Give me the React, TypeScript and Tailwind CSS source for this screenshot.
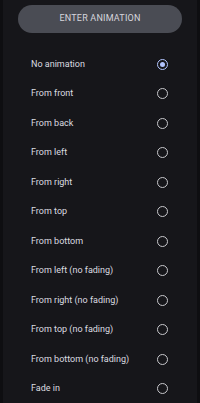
const options = [
  "No animation",
  "From front",
  "From back",
  "From left",
  "From right",
  "From top",
  "From bottom",
  "From left (no fading)",
  "From right (no fading)",
  "From top (no fading)",
  "From bottom (no fading)",
  "Fade in",
];

export default function App() {
  const selected = 0;
  return (
    <div
      className="w-[200px] h-[403px] overflow-hidden bg-[#0e0e11] px-[3px]"
      style={{ fontFamily: "Roboto, 'Liberation Sans', sans-serif" }}
    >
      <div className="h-full bg-[#16161a] flex flex-col">
        <div className="pt-[5px] px-[15px]">
          <button className="w-full h-[28px] rounded-[14px] bg-[#4a4c54] text-[#d6d6dc] text-[9px] tracking-[0.2px] flex items-center justify-center">
            ENTER ANIMATION
          </button>
        </div>
        <div className="mt-[16.5px] flex flex-col">
          {options.map((label, i) => (
            <div key={label} className="h-[29.5px] flex items-center justify-between pl-[28px] pr-[29px]">
              <span className="text-[9px] text-[#dcdce0]">{label}</span>
              {i === selected ? (
                <span className="w-[11px] h-[11px] rounded-full border-[1.5px] border-[#b3c5ff] flex items-center justify-center">
                  <span className="w-[5px] h-[5px] rounded-full bg-[#b3c5ff]" />
                </span>
              ) : (
                <span className="w-[11px] h-[11px] rounded-full border-[1.5px] border-[#c8c8cc]" />
              )}
            </div>
          ))}
        </div>
      </div>
    </div>
  );
}
